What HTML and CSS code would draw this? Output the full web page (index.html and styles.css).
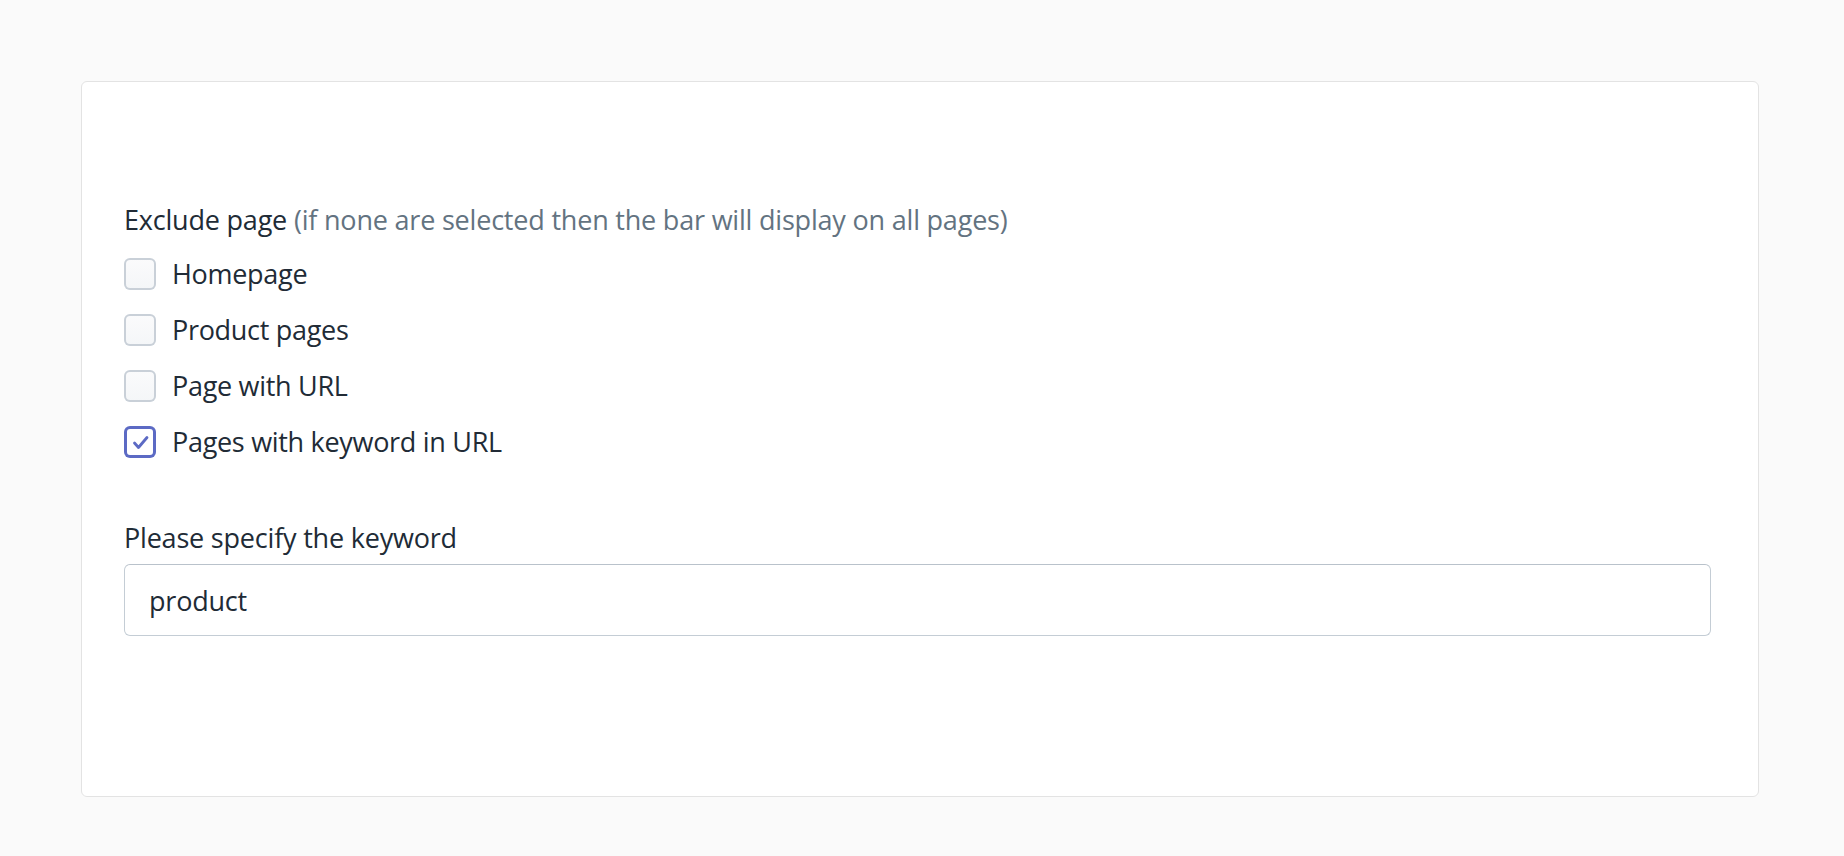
FILE: index.html
```html
<!DOCTYPE html>
<html lang="en">
<head>
<meta charset="utf-8">
<title>Exclude page settings</title>
<link rel="stylesheet" href="styles.css">
</head>
<body>
<div class="page">
  <section class="card">
    <div class="field">
      <div class="label">Exclude page <span class="hint">(if none are selected then the bar will display on all pages)</span></div>
      <ul class="choices">
        <li class="choice"><span class="box"></span><span class="choice-text">Homepage</span></li>
        <li class="choice"><span class="box"></span><span class="choice-text">Product pages</span></li>
        <li class="choice"><span class="box"></span><span class="choice-text">Page with URL</span></li>
        <li class="choice"><span class="box checked"><svg viewBox="0 0 32 32" width="32" height="32"><polyline points="10.5,17 14.5,21.5 23,11.5" fill="none" stroke="#5c6ac4" stroke-width="2.8" stroke-linecap="round" stroke-linejoin="round"/></svg></span><span class="choice-text">Pages with keyword in URL</span></li>
      </ul>
    </div>
    <div class="field keyword">
      <div class="label">Please specify the keyword</div>
      <div class="input">product</div>
    </div>
  </section>
</div>
</body>
</html>
```

FILE: styles.css
```css
html, body {
  margin: 0;
  padding: 0;
  background: #fafafa;
}
body {
  font-family: "Open Sans", "Noto Sans", sans-serif;
  font-size: 27px;
  color: #212b36;
  letter-spacing: -0.2px;
}
.page {
  padding: 81px 85px 0 81px;
}
.card {
  box-sizing: border-box;
  height: 716px;
  background: #ffffff;
  border: 1px solid #e3e3e3;
  border-radius: 6px;
  padding: 118px 47px 0 42px;
}
.label {
  line-height: 40px;
  height: 40px;
}
.hint {
  color: #637381;
}
.choices {
  list-style: none;
  margin: 0;
  padding: 6px 0 0 0;
}
.choice {
  display: flex;
  align-items: center;
  height: 56px;
}
.box {
  width: 32px;
  height: 32px;
  border-radius: 6px;
  box-shadow: inset 0 0 0 2px #c9d0d8;
  background: linear-gradient(#fbfbfc, #f4f6f8);
  flex: none;
}
.box svg {
  display: block;
}
.box.checked {
  box-shadow: inset 0 0 0 3px #5c6ac4;
  background: #ffffff;
}
.choice-text {
  margin-left: 16px;
  line-height: 40px;
  letter-spacing: -0.3px;
}
.keyword {
  margin-top: 48px;
}
.keyword .label {
  margin-bottom: 6px;
}
.input {
  box-sizing: border-box;
  height: 72px;
  border: 1.5px solid #c4cdd5;
  border-top-color: #b9c2cb;
  border-radius: 6px;
  padding: 0 24px;
  display: flex;
  align-items: center;
  color: #212b36;
}
```
